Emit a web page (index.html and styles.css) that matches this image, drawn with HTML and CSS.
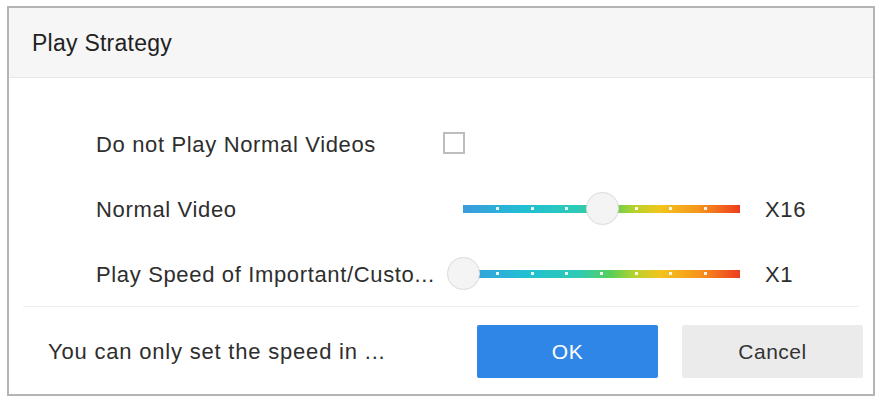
FILE: index.html
```html
<!DOCTYPE html>
<html lang="en">
<head>
    <meta charset="UTF-8">
    <meta name="viewport" content="width=device-width, initial-scale=1.0">
    <title>Play Strategy</title>
    <link rel="stylesheet" href="styles.css">
</head>
<body>
    <div class="dialog">
        <div class="dialog-header">Play Strategy</div>

        <div class="dialog-body">
            <div class="row">
                <span class="label">Do not Play Normal Videos</span>
                <span class="control"><span class="checkbox"></span></span>
                <span class="value"></span>
            </div>
            <div class="row">
                <span class="label">Normal Video</span>
                <span class="control">
                    <span class="slider">
                        <span class="track">
                            <i></i><i></i><i></i><i></i><i></i><i></i><i></i>
                        </span>
                        <span class="thumb" style="left: 50%"></span>
                    </span>
                </span>
                <span class="value">X16</span>
            </div>
            <div class="row">
                <span class="label">Play Speed of Important/Custo...</span>
                <span class="control">
                    <span class="slider">
                        <span class="track">
                            <i></i><i></i><i></i><i></i><i></i><i></i><i></i>
                        </span>
                        <span class="thumb" style="left: 0%"></span>
                    </span>
                </span>
                <span class="value">X1</span>
            </div>
        </div>

        <div class="dialog-footer">
            <span class="hint">You can only set the speed in ...</span>
            <button class="btn btn-ok">OK</button>
            <button class="btn btn-cancel">Cancel</button>
        </div>
    </div>
</body>
</html>
```

FILE: styles.css
```css
body {
  font-family: "Liberation Sans", Arial, sans-serif;
  margin: 0;
  padding: 0;
  background-color: #fff;
  color: #333;
}

.dialog {
  margin: 6px 4px 2px 7px;
  width: 864px;
  height: 386px;
  border: 2px solid #b4b4b4;
  display: flex;
  flex-direction: column;
  background-color: #fff;
}

.dialog-header {
  height: 68px;
  display: flex;
  align-items: center;
  padding-left: 23px;
  padding-top: 1px;
  background-color: #f6f6f6;
  border-bottom: 1px solid #e8e8e8;
  font-size: 23px;
  letter-spacing: 0.25px;
  color: #222;
}

.dialog-body {
  padding-top: 33px;
}

.row {
  height: 65px;
  display: grid;
  grid-template-columns: 349px 305px 1fr;
  align-items: center;
  padding-left: 87px;
  font-size: 22px;
  letter-spacing: 0.65px;
  color: #2e2e2e;
}

.row .label {
  margin-top: 2px;
}

.control {
  display: flex;
  align-items: center;
}

.checkbox {
  width: 18px;
  height: 18px;
  border: 2px solid #bdbdbd;
  margin-left: -2px;
  margin-top: -2px;
}

.slider {
  position: relative;
  width: 277px;
  height: 34px;
  margin-left: 18px;
  display: flex;
  align-items: center;
}

.track {
  width: 100%;
  height: 8px;
  background: linear-gradient(to right, #3a9bdc 0%, #22bfd4 22%, #2dcbb4 42%, #5ccf55 54%, #b9d22c 62%, #f2c51c 71%, #f6961d 85%, #ee3c1e 100%);
  display: flex;
  justify-content: space-between;
  align-items: center;
  padding: 0 33px;
  box-sizing: border-box;
}

.track i {
  width: 3px;
  height: 3px;
  background-color: #fff;
  opacity: 0.9;
}

.thumb {
  position: absolute;
  top: 0;
  width: 31px;
  height: 31px;
  margin-left: -16px;
  border-radius: 50%;
  background-color: #f4f4f4;
  border: 1px solid #dedede;
  box-shadow: 0 0 1px rgba(0, 0, 0, 0.08);
}

.value {
  padding-left: 15px;
  margin-top: 2px;
}

.dialog-footer {
  flex: 1;
  display: flex;
  align-items: center;
  margin: 0 14px;
  border-top: 1px solid #efefef;
}

.hint {
  flex: 1;
  font-size: 22px;
  letter-spacing: 0.8px;
  color: #2e2e2e;
  padding-left: 25px;
  margin-top: 3px;
}

.btn {
  width: 181px;
  height: 53px;
  border: none;
  border-radius: 2px;
  font-family: "Liberation Sans", Arial, sans-serif;
  font-size: 21px;
  letter-spacing: 0.5px;
  cursor: pointer;
  margin-top: 2px;
}

.btn-ok {
  background-color: #2f86e6;
  color: #fff;
  margin-right: 24px;
}

.btn-cancel {
  background-color: #ebebeb;
  color: #333;
  margin-right: -4px;
}
```
